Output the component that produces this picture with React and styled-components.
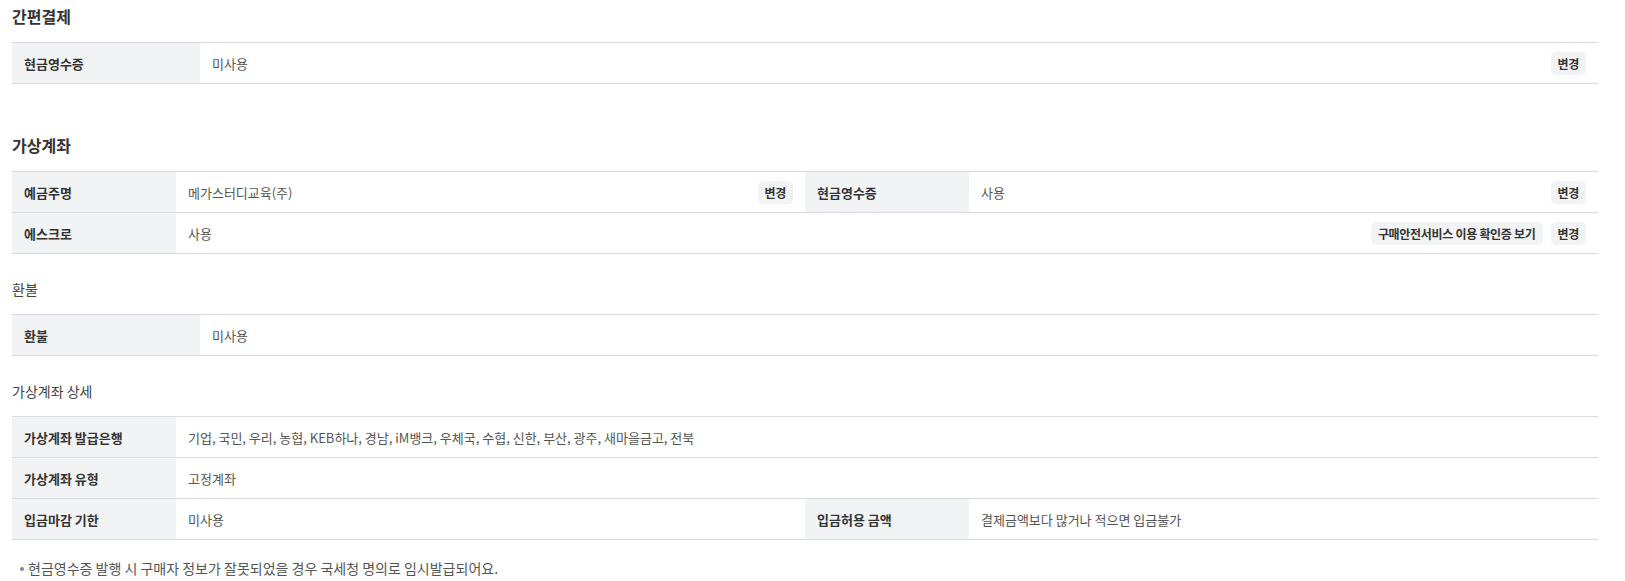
import React from "react";
import styled, { createGlobalStyle } from "styled-components";

const GlobalStyle = createGlobalStyle`
  body {
    margin: 0;
    background: #fff;
    font-family: "Noto Sans CJK KR", "Noto Sans", sans-serif;
    color: #333;
  }
`;

const Page = styled.div`
  padding: 4px 27px 0 12px;
`;

const SectionTitle = styled.h2`
  margin: ${(p) => p.$top || 0}px 0 14px;
  font-size: 16px;
  line-height: 24px;
  font-weight: 700;
  color: #333;
`;

const SubTitle = styled.h3`
  margin: 25px 0 15px;
  font-size: 14px;
  line-height: 20px;
  font-weight: 400;
  color: #444;
`;

const Table = styled.div`
  border-top: 1px solid #d8dadd;
`;

const Row = styled.div`
  display: flex;
  height: 41px;
  box-sizing: border-box;
  border-bottom: 1px solid #d8dadd;
`;

const Pair = styled.div`
  flex: 1;
  display: flex;
  min-width: 0;
`;

const Label = styled.div`
  width: ${(p) => p.$w || 164}px;
  flex-shrink: 0;
  box-sizing: border-box;
  padding-left: 12px;
  display: flex;
  align-items: center;
  background: #f2f3f5;
  font-size: 13px;
  font-weight: 700;
  color: #333;
`;

const Value = styled.div`
  flex: 1;
  display: flex;
  align-items: center;
  justify-content: space-between;
  padding: 0 12px;
  font-size: 13px;
  color: #555;
  white-space: nowrap;
`;

const Actions = styled.div`
  display: flex;
  gap: 8px;
`;

const Button = styled.button`
  height: 23px;
  padding: 0 7px;
  border: none;
  border-radius: 5px;
  background: #f2f3f5;
  font-family: inherit;
  font-size: 12px;
  font-weight: 700;
  color: #333;
  letter-spacing: -0.3px;
  cursor: pointer;
`;

const Notes = styled.ul`
  margin: 18px 0 0;
  padding: 0;
  list-style: none;
`;

const Note = styled.li`
  position: relative;
  padding-left: 16px;
  font-size: 14px;
  line-height: 20px;
  color: #555;

  &::before {
    content: "";
    position: absolute;
    left: 8px;
    top: 9px;
    width: 4px;
    height: 4px;
    border-radius: 50%;
    background: #888;
  }
`;

const Field = ({ label, value, w, buttons = [] }) => (
  <Pair>
    <Label $w={w}>{label}</Label>
    <Value>
      <span>{value}</span>
      {buttons.length > 0 && (
        <Actions>
          {buttons.map((b) => (
            <Button key={b}>{b}</Button>
          ))}
        </Actions>
      )}
    </Value>
  </Pair>
);

export default function App() {
  return (
    <Page>
      <GlobalStyle />
      <SectionTitle>간편결제</SectionTitle>
      <Table>
        <Row>
          <Field w={188} label="현금영수증" value="미사용" buttons={["변경"]} />
        </Row>
      </Table>

      <SectionTitle $top={49}>가상계좌</SectionTitle>
      <Table>
        <Row>
          <Field label="예금주명" value="메가스터디교육(주)" buttons={["변경"]} />
          <Field label="현금영수증" value="사용" buttons={["변경"]} />
        </Row>
        <Row>
          <Field
            label="에스크로"
            value="사용"
            buttons={["구매안전서비스 이용 확인증 보기", "변경"]}
          />
        </Row>
      </Table>

      <SubTitle>환불</SubTitle>
      <Table>
        <Row>
          <Field w={188} label="환불" value="미사용" />
        </Row>
      </Table>

      <SubTitle>가상계좌 상세</SubTitle>
      <Table>
        <Row>
          <Field
            label="가상계좌 발급은행"
            value="기업, 국민, 우리, 농협, KEB하나, 경남, iM뱅크, 우체국, 수협, 신한, 부산, 광주, 새마을금고, 전북"
          />
        </Row>
        <Row>
          <Field label="가상계좌 유형" value="고정계좌" />
        </Row>
        <Row>
          <Field label="입금마감 기한" value="미사용" />
          <Field label="입금허용 금액" value="결제금액보다 많거나 적으면 입금불가" />
        </Row>
      </Table>

      <Notes>
        <Note>현금영수증 발행 시 구매자 정보가 잘못되었을 경우 국세청 명의로 임시발급되어요.</Note>
      </Notes>
    </Page>
  );
}
